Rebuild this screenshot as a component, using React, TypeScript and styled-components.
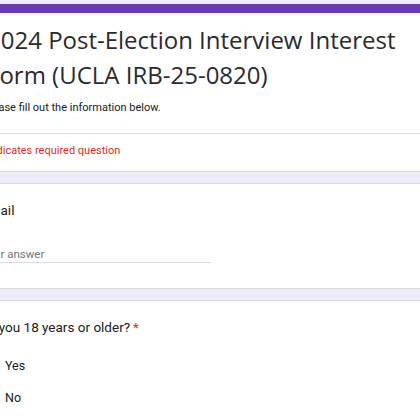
import styled, { createGlobalStyle } from "styled-components";

const palette = {
  backdrop: "#f0ebf8",
  purple: "#673ab7",
  card: "#ffffff",
  border: "#dadce0",
  text: "#202124",
  placeholder: "#70757a",
  required: "#d93025",
  radio: "#5f6368",
};

const GlobalStyle = createGlobalStyle`
  html, body {
    margin: 0;
    padding: 0;
    background: ${palette.backdrop};
  }
  body {
    font-family: Roboto, "Liberation Sans", Arial, sans-serif;
    color: ${palette.text};
  }
`;

const Page = styled.main`
  width: 420px;
  height: 420px;
  overflow: hidden;
  background: ${palette.backdrop};
  padding-top: 4px;
  box-sizing: border-box;
`;

// the form is scrolled/cropped so its left edge sits off screen
const Column = styled.div`
  width: 520px;
  margin-left: -44px;
  display: flex;
  flex-direction: column;
  gap: 11px;
`;

const Card = styled.section`
  background: ${palette.card};
  border: 1px solid ${palette.border};
  border-radius: 8px;
  overflow: hidden;
`;

const HeaderCard = styled(Card)`
  border-top: none;
`;

const AccentBar = styled.div`
  height: 9px;
  background: ${palette.purple};
`;

const HeaderBody = styled.div`
  padding: 9px 24px 17px 30px;
`;

const Title = styled.h1`
  margin: 0;
  font-family: "Open Sans", Roboto, sans-serif;
  font-weight: 400;
  font-size: 24px;
  line-height: 35px;
  color: #2a2b2e;
`;

const Description = styled.p`
  margin: 8px 0 0 -4px;
  font-size: 11px;
  line-height: 16px;
  color: ${palette.text};
`;

const Divider = styled.hr`
  margin: 0;
  border: none;
  border-top: 1px solid ${palette.border};
`;

const RequiredNote = styled.div`
  padding: 9px 24px 12px 23px;
  font-size: 11px;
  line-height: 16px;
  color: ${palette.required};
`;

const QuestionCard = styled(Card)<{ $top: number; $bottom: number; $indent: number }>`
  padding: ${(p) => p.$top}px 24px ${(p) => p.$bottom}px ${(p) => p.$indent}px;
`;

const QuestionTitle = styled.div`
  font-size: 13.5px;
  line-height: 20px;
  color: ${palette.text};
`;

const Star = styled.span`
  color: ${palette.required};
  margin-left: 3px;
`;

const AnswerLine = styled.div`
  margin-top: 26px;
  width: 230px;
  font-size: 11.5px;
  line-height: 16px;
  color: ${palette.placeholder};
  border-bottom: 1px solid ${palette.border};
`;

const Options = styled.div`
  margin-top: 12px;
  display: flex;
  flex-direction: column;
`;

const OptionRow = styled.label`
  display: flex;
  align-items: center;
  gap: 12px;
  height: 32px;
  font-size: 12.5px;
  color: ${palette.text};
`;

const Radio = styled.span`
  width: 14px;
  height: 14px;
  flex: none;
  border: 2px solid ${palette.radio};
  border-radius: 50%;
`;

export default function App() {
  return (
    <>
      <GlobalStyle />
      <Page>
        <Column>
          <HeaderCard>
            <AccentBar />
            <HeaderBody>
              <Title>2024 Post-Election Interview Interest Form (UCLA IRB-25-0820)</Title>
              <Description>Please fill out the information below.</Description>
            </HeaderBody>
            <Divider />
            <RequiredNote>* Indicates required question</RequiredNote>
          </HeaderCard>

          <QuestionCard $top={16} $bottom={25} $indent={24}>
            <QuestionTitle>Email</QuestionTitle>
            <AnswerLine>Your answer</AnswerLine>
          </QuestionCard>

          <QuestionCard $top={16} $bottom={40} $indent={18}>
            <QuestionTitle>
              Are you 18 years or older?<Star>*</Star>
            </QuestionTitle>
            <Options>
              <OptionRow>
                <Radio />
                Yes
              </OptionRow>
              <OptionRow>
                <Radio />
                No
              </OptionRow>
            </Options>
          </QuestionCard>
        </Column>
      </Page>
    </>
  );
}
